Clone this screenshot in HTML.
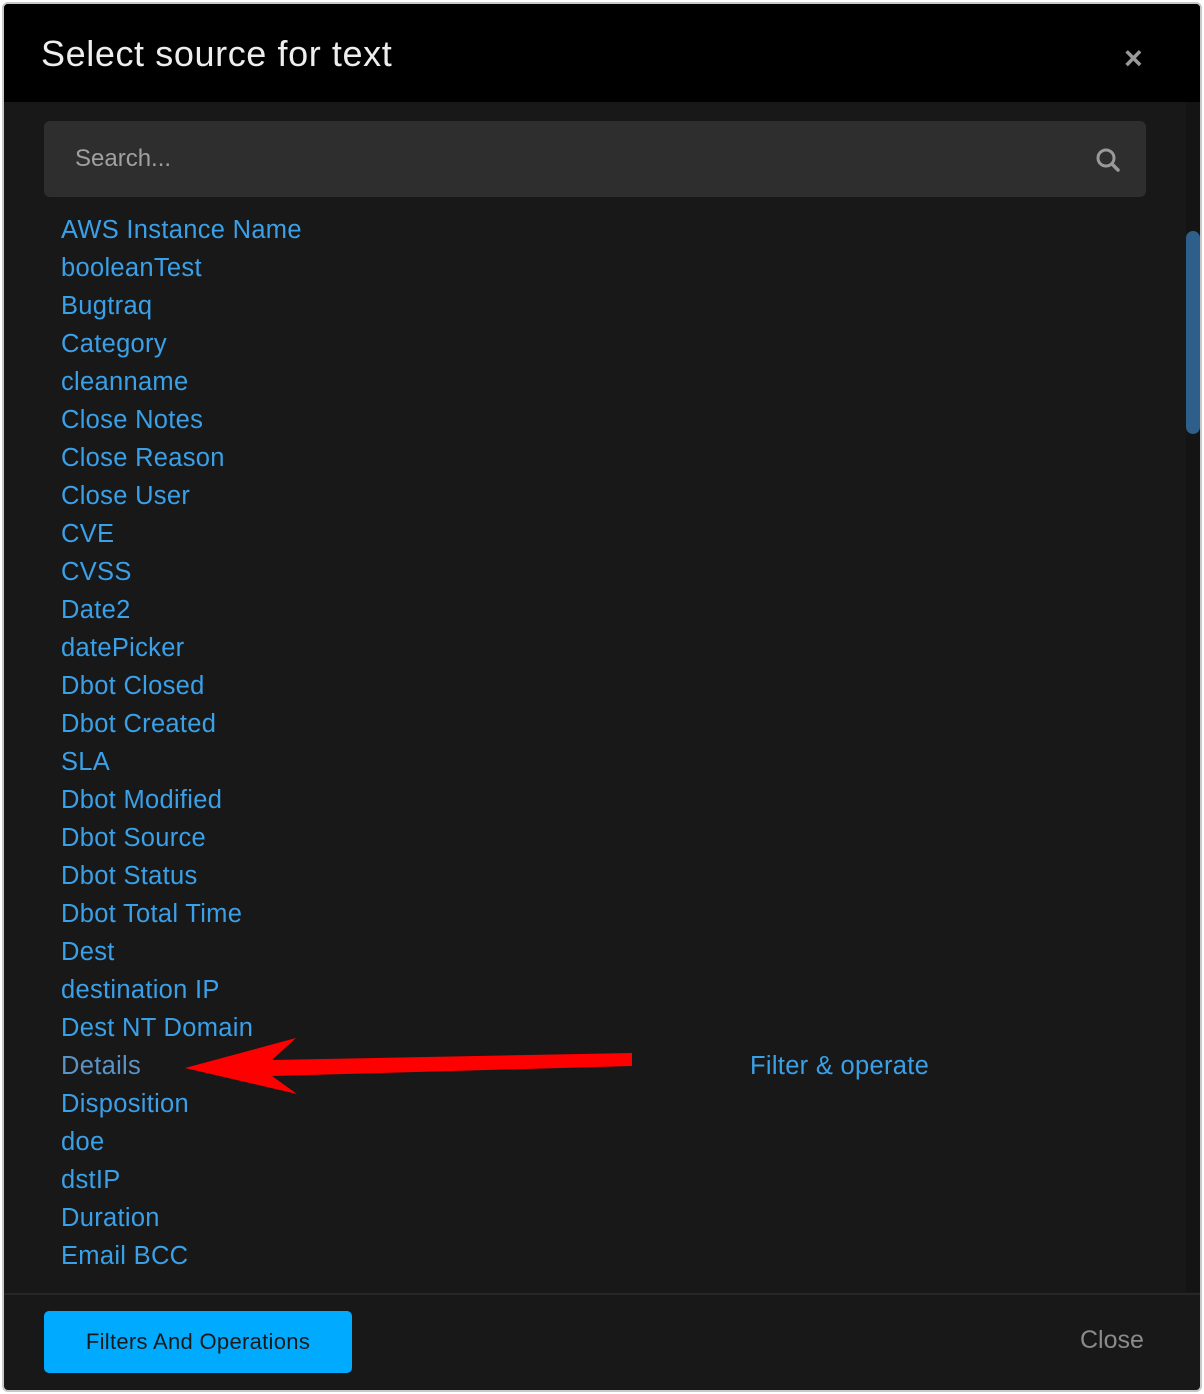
<!DOCTYPE html>
<html><head><style>
*{margin:0;padding:0;box-sizing:border-box}
body{width:1204px;height:1394px;background:#fff;position:relative;overflow:hidden;font-family:"Liberation Sans",sans-serif}
.modal{position:absolute;left:2px;top:2px;width:1200px;height:1390px;border:2px solid #c8c8c8;border-radius:6px;background:#181818;overflow:hidden}
.hdr{position:absolute;left:0;top:0;right:0;height:98px;background:#000}
.title{position:absolute;left:37px;top:29px;color:#eee;font-size:36px;letter-spacing:.6px}
.x{position:absolute;left:1120px;top:36px;color:#999;font-size:32px;font-weight:bold}
.search{position:absolute;left:40px;top:117px;width:1102px;height:76px;background:#2e2e2e;border-radius:6px}
.search span{position:absolute;left:31px;top:24px;color:#a0a0a0;font-size:24px}
.list{position:absolute;left:57px;top:207px;color:#3aa0e8;font-size:25.5px;line-height:38px;letter-spacing:.3px}
.track{position:absolute;left:1182px;top:98px;width:14px;height:1190px;background:#141414}
.thumb{position:absolute;left:1182px;top:227px;width:14px;height:203px;background:#2d5f8a;border-radius:7px}
.sep{position:absolute;left:0;right:0;top:1289px;height:2px;background:#262626}
.btn{position:absolute;left:40px;top:1307px;width:308px;height:62px;background:#00aaff;border-radius:5px;color:#1a1a1a;font-size:22px;text-align:center;line-height:62px;letter-spacing:.3px}
.close{position:absolute;left:1076px;top:1322px;color:#8a8a8a;font-size:25px}
.fo{position:absolute;left:746px;top:1048px;color:#3aa0e8;font-size:25.5px;letter-spacing:.3px}
</style></head><body>
<div class="modal">
<div class="hdr"><div class="title">Select source for text</div><div class="x">×</div></div>
<div class="search"><span>Search...</span>
<svg style="position:absolute;left:1050px;top:25px" width="28" height="28" viewBox="0 0 28 28"><circle cx="12" cy="12" r="8" fill="none" stroke="#999" stroke-width="3"/><line x1="18" y1="18" x2="24" y2="24" stroke="#999" stroke-width="3.5" stroke-linecap="round"/></svg>
</div>
<div class="list">
<div>AWS Instance Name</div><div>booleanTest</div><div>Bugtraq</div><div>Category</div><div>cleanname</div><div>Close Notes</div><div>Close Reason</div><div>Close User</div><div>CVE</div><div>CVSS</div><div>Date2</div><div>datePicker</div><div>Dbot Closed</div><div>Dbot Created</div><div>SLA</div><div>Dbot Modified</div><div>Dbot Source</div><div>Dbot Status</div><div>Dbot Total Time</div><div>Dest</div><div>destination IP</div><div>Dest NT Domain</div><div style="color:#5b93c4">Details</div><div>Disposition</div><div>doe</div><div>dstIP</div><div>Duration</div><div>Email BCC</div>
</div>
<div class="fo">Filter &amp; operate</div>
<div class="track"></div><div class="thumb"></div>
<div class="sep"></div>
<div class="btn">Filters And Operations</div>
<div class="close">Close</div>
</div>
<svg style="position:absolute;left:0;top:0" width="1204" height="1394"><polygon points="185,1068 296,1038 272,1060 632,1053 632,1066 272,1076 297,1094" fill="#ff0000"/></svg>
</body></html>
